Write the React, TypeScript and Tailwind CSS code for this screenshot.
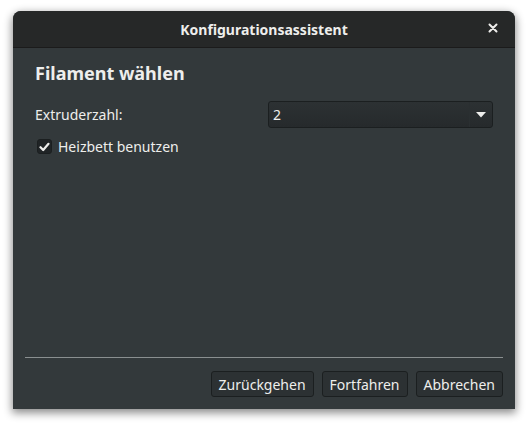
import { useState } from "react";

// GTK style dialog: Konfigurationsassistent
export default function App() {
  const [heatbed, setHeatbed] = useState(true);

  return (
    <div className="w-[528px] h-[426px] bg-white pt-[11px] pl-[13px]" style={{ fontFamily: '"Noto Sans", sans-serif' }}>
      <div className="w-[502px] h-[398px] flex flex-col rounded-t-[8px] overflow-hidden bg-[#33393b] shadow-[0_3px_9px_1px_rgba(0,0,0,0.45)]">
        {/* title bar */}
        <div className="h-[37px] shrink-0 flex items-center bg-[#262828] border-b border-[#1b1b1b] relative">
          <div className="flex-1 text-center text-[14px] font-bold text-[#eeeeec]">Konfigurationsassistent</div>
          <div className="absolute right-[14px] top-[9px] w-[16px] h-[16px] flex items-center justify-center">
            <svg width="10" height="10" viewBox="0 0 10 10">
              <path d="M1.5 1.5 L8.5 8.5 M8.5 1.5 L1.5 8.5" stroke="#eeeeec" strokeWidth="2" strokeLinecap="round" />
            </svg>
          </div>
        </div>

        {/* content */}
        <div className="flex-1 flex flex-col px-[12px]">
          <div className="px-[10px] pt-[12px]">
            <h1 className="text-[18px] font-bold text-[#eeeeec] leading-[26px]">Filament wählen</h1>
            <div className="mt-[15px] flex items-center">
              <span className="w-[233px] text-[14px] text-[#eeeeec]">Extruderzahl:</span>
              <div className="w-[225px] h-[27px] flex items-center rounded-[3px] border border-[#1b1f20] bg-gradient-to-b from-[#2c3133] to-[#262a2c]">
                <span className="flex-1 pl-[4px] text-[14px] text-[#eeeeec]">2</span>
                <div className="w-[23px] h-full flex items-center justify-center border-l border-[#2a2f31]">
                  <svg width="10" height="6" viewBox="0 0 10 6">
                    <path d="M0 0 L10 0 L5 5.5 Z" fill="#eeeeec" />
                  </svg>
                </div>
              </div>
            </div>
            <label className="mt-[8px] flex items-center gap-[6px] cursor-pointer" onClick={() => setHeatbed(!heatbed)}>
              <span className="ml-[2px] w-[15px] h-[15px] rounded-[3px] border border-[#1b1f20] bg-[#202426] flex items-center justify-center">
                {heatbed && (
                  <svg width="11" height="10" viewBox="0 0 11 10">
                    <path d="M1.5 5.2 L4.2 8 L9.5 1.8" stroke="#eeeeec" strokeWidth="2.2" fill="none" strokeLinecap="round" strokeLinejoin="round" />
                  </svg>
                )}
              </span>
              <span className="text-[14px] text-[#eeeeec]">Heizbett benutzen</span>
            </label>
          </div>

          <div className="flex-1" />

          <div className="h-px bg-[#8a8f90]" />
          <div className="h-[51px] flex items-start justify-end gap-[8px] pt-[13px]">
            <button className="h-[26px] px-[7px] rounded-[3px] border border-[#1b1f20] bg-[#2c3133] text-[14px] text-[#eeeeec]">Zurückgehen</button>
            <button className="h-[26px] px-[7px] rounded-[3px] border border-[#1b1f20] bg-[#2c3133] text-[14px] text-[#eeeeec]">Fortfahren</button>
            <button className="h-[26px] px-[7px] rounded-[3px] border border-[#1b1f20] bg-[#2c3133] text-[14px] text-[#eeeeec]">Abbrechen</button>
          </div>
        </div>
      </div>
    </div>
  );
}
